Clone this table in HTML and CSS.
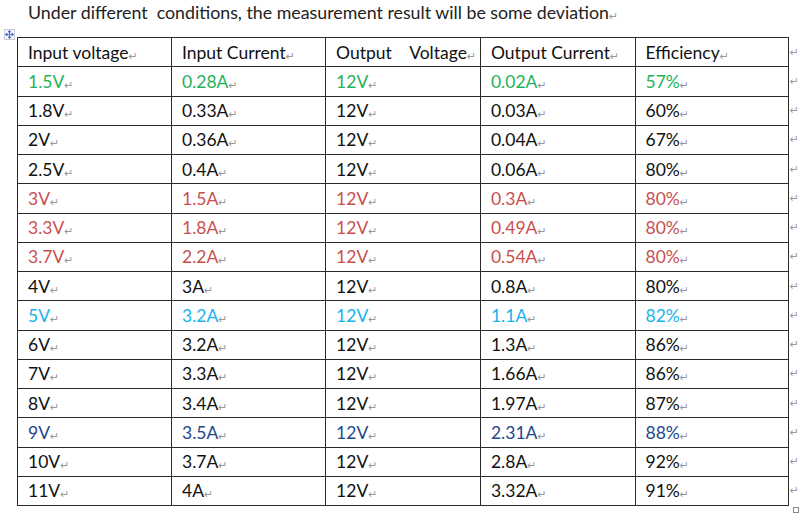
FILE: index.html
```html
<!DOCTYPE html>
<html>
<head>
<meta charset="utf-8">
<link rel="stylesheet" href="styles.css">
</head>
<body>
<p class="title">Under different&nbsp; conditions, the measurement result will be some deviation<span class="pm">↵</span></p>
<div class="wrap">
  <span class="move" aria-hidden="true">
    <svg width="9" height="9" viewBox="0 0 9 9"><path d="M4.5 1v7M1 4.5h7M4.5 0.5l-1.5 1.5h3zM4.5 8.5l-1.5-1.5h3zM0.5 4.5l1.5-1.5v3zM8.5 4.5l-1.5-1.5v3z" stroke="#4a6fc0" stroke-width="0.9" fill="#4a6fc0"/></svg>
  </span>
  <table class="data">
    <tr class="head"><td>Input voltage<span class="pm">↵</span></td><td>Input Current<span class="pm">↵</span></td><td class="pre">Output    Voltage<span class="pm">↵</span></td><td>Output Current<span class="pm">↵</span></td><td>Efficiency<span class="pm">↵</span></td><td class="eol"><span class="pm">↵</span></td></tr>
    <tr class="green"><td>1.5V<span class="pm">↵</span></td><td>0.28A<span class="pm">↵</span></td><td>12V<span class="pm">↵</span></td><td>0.02A<span class="pm">↵</span></td><td>57%<span class="pm">↵</span></td><td class="eol"><span class="pm">↵</span></td></tr>
    <tr><td>1.8V<span class="pm">↵</span></td><td>0.33A<span class="pm">↵</span></td><td>12V<span class="pm">↵</span></td><td>0.03A<span class="pm">↵</span></td><td>60%<span class="pm">↵</span></td><td class="eol"><span class="pm">↵</span></td></tr>
    <tr><td>2V<span class="pm">↵</span></td><td>0.36A<span class="pm">↵</span></td><td>12V<span class="pm">↵</span></td><td>0.04A<span class="pm">↵</span></td><td>67%<span class="pm">↵</span></td><td class="eol"><span class="pm">↵</span></td></tr>
    <tr><td>2.5V<span class="pm">↵</span></td><td>0.4A<span class="pm">↵</span></td><td>12V<span class="pm">↵</span></td><td>0.06A<span class="pm">↵</span></td><td>80%<span class="pm">↵</span></td><td class="eol"><span class="pm">↵</span></td></tr>
    <tr class="red"><td>3V<span class="pm">↵</span></td><td>1.5A<span class="pm">↵</span></td><td>12V<span class="pm">↵</span></td><td>0.3A<span class="pm">↵</span></td><td>80%<span class="pm">↵</span></td><td class="eol"><span class="pm">↵</span></td></tr>
    <tr class="red"><td>3.3V<span class="pm">↵</span></td><td>1.8A<span class="pm">↵</span></td><td>12V<span class="pm">↵</span></td><td>0.49A<span class="pm">↵</span></td><td>80%<span class="pm">↵</span></td><td class="eol"><span class="pm">↵</span></td></tr>
    <tr class="red"><td>3.7V<span class="pm">↵</span></td><td>2.2A<span class="pm">↵</span></td><td>12V<span class="pm">↵</span></td><td>0.54A<span class="pm">↵</span></td><td>80%<span class="pm">↵</span></td><td class="eol"><span class="pm">↵</span></td></tr>
    <tr><td>4V<span class="pm">↵</span></td><td>3A<span class="pm">↵</span></td><td>12V<span class="pm">↵</span></td><td>0.8A<span class="pm">↵</span></td><td>80%<span class="pm">↵</span></td><td class="eol"><span class="pm">↵</span></td></tr>
    <tr class="cyan"><td>5V<span class="pm">↵</span></td><td>3.2A<span class="pm">↵</span></td><td>12V<span class="pm">↵</span></td><td>1.1A<span class="pm">↵</span></td><td>82%<span class="pm">↵</span></td><td class="eol"><span class="pm">↵</span></td></tr>
    <tr><td>6V<span class="pm">↵</span></td><td>3.2A<span class="pm">↵</span></td><td>12V<span class="pm">↵</span></td><td>1.3A<span class="pm">↵</span></td><td>86%<span class="pm">↵</span></td><td class="eol"><span class="pm">↵</span></td></tr>
    <tr><td>7V<span class="pm">↵</span></td><td>3.3A<span class="pm">↵</span></td><td>12V<span class="pm">↵</span></td><td>1.66A<span class="pm">↵</span></td><td>86%<span class="pm">↵</span></td><td class="eol"><span class="pm">↵</span></td></tr>
    <tr><td>8V<span class="pm">↵</span></td><td>3.4A<span class="pm">↵</span></td><td>12V<span class="pm">↵</span></td><td>1.97A<span class="pm">↵</span></td><td>87%<span class="pm">↵</span></td><td class="eol"><span class="pm">↵</span></td></tr>
    <tr class="navy"><td>9V<span class="pm">↵</span></td><td>3.5A<span class="pm">↵</span></td><td>12V<span class="pm">↵</span></td><td>2.31A<span class="pm">↵</span></td><td>88%<span class="pm">↵</span></td><td class="eol"><span class="pm">↵</span></td></tr>
    <tr><td>10V<span class="pm">↵</span></td><td>3.7A<span class="pm">↵</span></td><td>12V<span class="pm">↵</span></td><td>2.8A<span class="pm">↵</span></td><td>92%<span class="pm">↵</span></td><td class="eol"><span class="pm">↵</span></td></tr>
    <tr><td>11V<span class="pm">↵</span></td><td>4A<span class="pm">↵</span></td><td>12V<span class="pm">↵</span></td><td>3.32A<span class="pm">↵</span></td><td>91%<span class="pm">↵</span></td><td class="eol"><span class="pm">↵</span></td></tr>
  </table>
  <span class="resize" aria-hidden="true"></span>
</div>
</body>
</html>
```
FILE: styles.css
```css
html, body {
  margin: 0;
  padding: 0;
  background: #fff;
}
body {
  font-family: "Lato", "Liberation Sans", sans-serif;
  font-size: 17.5px;
  color: #111;
  width: 800px;
  height: 515px;
  overflow: hidden;
}
.title {
  margin: 0;
  padding: 0 0 0 28px;
  height: 26px;
  line-height: 24px;
  font-size: 17.8px;
  color: #222;
}
.pm {
  font-family: "DejaVu Sans", sans-serif;
  font-size: 11px;
  color: #999;
  margin-left: 0;
  vertical-align: -1px;
}
.wrap {
  position: relative;
  padding: 11px 0 0 17px;
}
.move {
  position: absolute;
  left: 4px;
  top: 3px;
  width: 9px;
  height: 9px;
  border: 1px solid #c8c8d0;
  background: #f4f6fb;
  display: flex;
  align-items: center;
  justify-content: center;
}
.move svg { display: block; }
.data {
  border-collapse: collapse;
  table-layout: fixed;
}
.data td {
  border: 1px solid #2a2a2a;
  width: 155px;
  height: 29.25px;
  padding: 0 0 0 10px;
  box-sizing: border-box;
  vertical-align: middle;
  white-space: nowrap;
  overflow: hidden;
}
.data td.pre { white-space: pre; }
.data td.eol {
  border: none;
  width: 7px;
  padding: 0 0 0 1px;
  overflow: visible;
  vertical-align: 2px;
}
.green td { color: #1fb25a; }
.red td { color: #c9504e; }
.cyan td { color: #18b3ec; }
.navy td { color: #24478c; }
.resize {
  position: absolute;
  left: 793px;
  top: 481px;
  width: 4px;
  height: 4px;
  border: 1px solid #888;
  background: #fff;
}
```
